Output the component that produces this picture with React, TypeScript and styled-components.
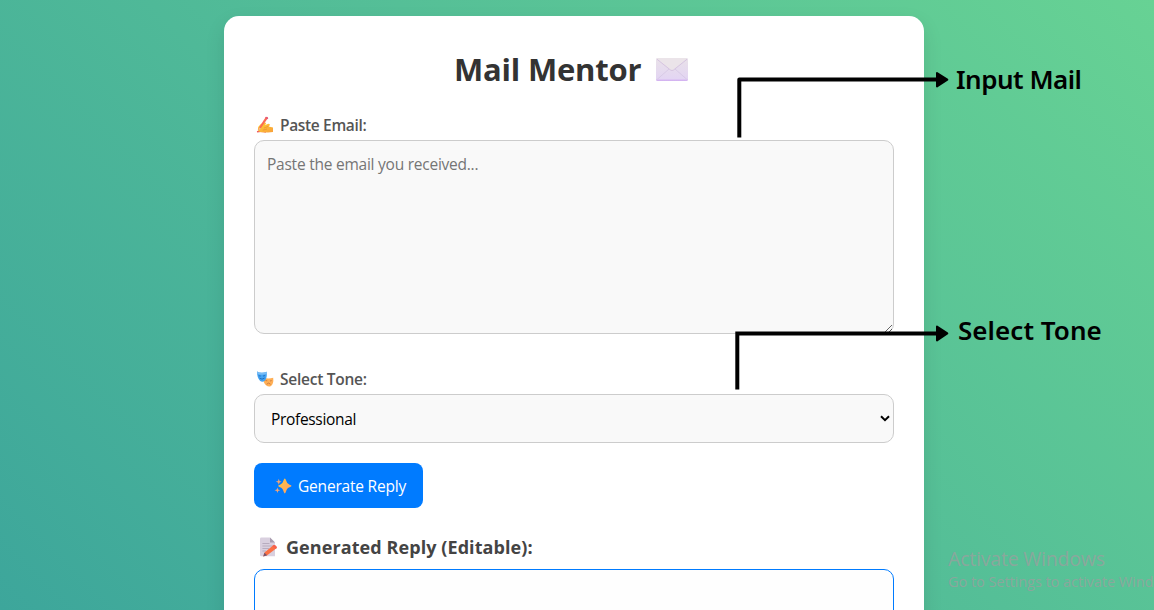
import React from "react";
import styled, { createGlobalStyle } from "styled-components";

const GlobalStyle = createGlobalStyle`
  * { box-sizing: border-box; }
  html, body { margin: 0; height: 610px; overflow: hidden; }
  body { font-family: "Open Sans", "Noto Sans", sans-serif; }
`;

const Page = styled.div`
  position: relative;
  height: 610px;
  overflow: hidden;
  padding-top: 16px;
  padding-left: 224px;
  background: linear-gradient(45deg, #3da69b 0%, #67d294 100%);
`;

const Card = styled.main`
  width: 700px;
  height: 900px;
  padding: 30px;
  display: flex;
  flex-direction: column;
  align-items: flex-start;
  background: #fff;
  border-radius: 15px;
  box-shadow: 0 8px 20px rgba(0, 0, 0, 0.1);
`;

const Label = styled.span<{ $size: number; $weight?: number; $color: string; $spacing?: number }>`
  font-size: ${(p) => p.$size}px;
  font-weight: ${(p) => p.$weight ?? 400};
  color: ${(p) => p.$color};
  letter-spacing: ${(p) => p.$spacing ?? 0}px;
  white-space: pre;
`;

const Title = styled.h1`
  margin: 0;
  width: 100%;
  height: 48px;
  padding: 0 206px 2px 200px;
  display: flex;
  align-items: center;
  justify-content: space-between;
`;

const FieldLabel = styled.label<{ $top: number }>`
  height: 22px;
  margin-top: ${(p) => p.$top}px;
  margin-bottom: 4px;
  padding-left: 2px;
  display: flex;
  align-items: center;
  gap: 6px;
`;

const MailInput = styled.textarea`
  display: block;
  width: 640px;
  height: 194px;
  padding: 11px 12px;
  border: 1px solid #ccc;
  border-radius: 10px;
  background: #f9f9f9;
  font: 400 15.5px/24px "Open Sans", "Noto Sans", sans-serif;
  letter-spacing: -0.24px;
  resize: vertical;
  outline: none;
  &::placeholder { color: #757575; }
`;

const ToneSelect = styled.div`
  width: 640px;
  height: 49px;
  padding: 0 3px 0 16px;
  display: flex;
  align-items: center;
  justify-content: space-between;
  border: 1px solid #ccc;
  border-radius: 10px;
  background: #f9f9f9;
`;

const GenerateButton = styled.button`
  width: 169px;
  height: 45px;
  margin-top: 20px;
  padding: 0 0 0 20px;
  display: flex;
  align-items: center;
  gap: 6px;
  border: 0;
  border-radius: 8px;
  background: #007bff;
  font-family: inherit;
`;

const SectionTitle = styled.h3`
  height: 26px;
  margin: 26px 0 9px;
  padding-left: 5px;
  display: flex;
  align-items: center;
  gap: 8px;
`;

const ReplyBox = styled.div`
  width: 640px;
  height: 200px;
  border: 1px solid #007bff;
  border-radius: 10px;
  background: #fefefe;
`;

const Callouts = styled.svg`
  position: absolute;
  left: 0;
  top: 0;
`;

const CalloutText = styled.div<{ $x: number; $y: number; $spacing: number }>`
  position: absolute;
  left: ${(p) => p.$x}px;
  top: ${(p) => p.$y}px;
  font: 600 26px/36px "Noto Sans", "Open Sans", sans-serif;
  letter-spacing: ${(p) => p.$spacing}px;
  color: #000;
  white-space: nowrap;
`;

const Watermark = styled.div`
  position: absolute;
  left: 948px;
  top: 547px;
  display: flex;
  flex-direction: column;
  line-height: 23px;
`;

const EnvelopeIcon = () => (
  <svg width="32" height="24" viewBox="0 0 32 24">
    <defs>
      <linearGradient id="env" x1="0" y1="0" x2="0" y2="1">
        <stop offset="0" stopColor="#e9e2e8" />
        <stop offset="0.9" stopColor="#e3d5f3" />
        <stop offset="1" stopColor="#cfaaf0" />
      </linearGradient>
    </defs>
    <rect width="32" height="23" y="1" rx="1.6" fill="url(#env)" />
    <path d="M1 22.5 L13 12 M31 22.5 L19 12" stroke="#d6c8e4" strokeWidth=".9" />
    <path d="M.8 2 L14.5 12.9 Q16 13.9 17.5 12.9 L31.2 2 Q31 1 30 1 H2 Q1 1 .8 2Z" fill="#ebe4e9" />
    <path d="M.8 2.1 L14.5 13 Q16 14 17.5 13 L31.2 2.1" fill="none" stroke="#d2c0df" strokeWidth=".9" />
  </svg>
);

const WritingHandIcon = () => (
  <svg width="18" height="18" viewBox="0 0 18 18">
    <defs>
      <linearGradient id="hand" x1="0" y1="0" x2="1" y2="1">
        <stop offset="0" stopColor="#ffd02f" />
        <stop offset="1" stopColor="#f9a03c" />
      </linearGradient>
    </defs>
    <path d="M1 15.8 Q6 14.6 10 16.2" stroke="#ef5b62" strokeWidth="1.4" fill="none" />
    <path d="M2.2 11 Q4.2 7.6 7.6 6.8 Q9.8 5.9 10 7.4 L9 9.2 Q12.4 6.8 13.8 8.2 Q14.3 9.3 12.6 10.4 L17 11.4 V16 L12 16.4 L5 16.2 Q1.7 15.7 1.9 13.8Z" fill="url(#hand)" />
    <path d="M8 12 L12.3 10.3 M6.8 14.2 L11 13" stroke="#ea8b35" strokeWidth=".7" />
    <path d="M2.2 14.4 L3.5 10.8 L9.6 1.2 Q11.2 .1 12.1 1.7 L5.2 11.8Z" fill="#fb6b52" />
    <path d="M9.5 1.3 L12 2.8" stroke="#dc5488" strokeWidth="1.3" />
    <path d="M2 15 L3.4 11.4 L5 12.4Z" fill="#f6bd8b" />
  </svg>
);

const MasksIcon = () => (
  <svg width="18" height="18" viewBox="0 0 18 18">
    <path d="M7 7.5 Q12 9.5 17.2 7.8 Q18 14.2 14.6 16.3 Q12.4 17.2 10 15.2 Q7 12.5 7 7.5Z" fill="#ffaf55" />
    <path d="M9.5 10.5 L11.3 10.8 M14 11 L15.7 10.6 M10.6 14.3 Q12.7 11.8 14.6 14.3" fill="none" stroke="#c9793f" strokeWidth=".9" />
    <path d="M1 1.6 Q5.6 4 10.6 1.7 Q11.4 8 8.8 10.8 Q6.4 12.5 4.2 11 Q.9 8 1 1.6Z" fill="#43a3f3" />
    <path d="M1 1.6 Q5.6 4 10.6 1.7 L10.7 4 Q5 5.5 1.1 3.8Z" fill="#78bcf5" />
    <path d="M2.6 5.8 L4.7 6 M7.1 6 L9.1 5.6 M3.6 8.2 Q6 10.2 8.6 8" fill="none" stroke="#2470bd" strokeWidth="1" />
  </svg>
);

const SparklesIcon = () => (
  <svg width="18" height="18" viewBox="0 0 18 18">
    <defs>
      <linearGradient id="spark" x1="0" y1="0" x2="1" y2="1">
        <stop offset="0" stopColor="#ffc83e" />
        <stop offset="1" stopColor="#ff9d66" />
      </linearGradient>
    </defs>
    <path d="M10.8 1.4 Q11.5 1.4 12 3.2 Q12.8 6.8 15.6 7.7 Q17.5 8.3 17.5 9 Q17.5 9.6 15.6 10.2 Q12.8 11 12 14.6 Q11.5 16.4 10.8 16.4 Q10.1 16.4 9.6 14.6 Q8.8 11 6 10.2 Q4.2 9.6 4.2 9 Q4.2 8.3 6 7.7 Q8.8 6.8 9.6 3.2 Q10.1 1.4 10.8 1.4Z" fill="url(#spark)" />
    <path d="M4.8 1.8 L5.5 4 L7.7 4.8 L5.5 5.6 L4.8 7.8 L4 5.6 L1.8 4.8 L4 4Z M3.4 10.4 L4.1 12.5 L6.2 13.2 L4.1 14 L3.4 16 L2.7 14 L.6 13.2 L2.7 12.5Z" fill="#f5a574" />
  </svg>
);

const MemoIcon = () => (
  <svg width="19" height="20" viewBox="0 0 19 20">
    <path d="M2.2 .5 H11 L16 5.5 V19.2 H2.2 Q1 19.2 1 18 V1.8 Q1 .5 2.2 .5Z" fill="#d9d0df" />
    <path d="M11 .5 V5.5 H16Z" fill="#a99caf" />
    <path d="M3.4 6.5 H10.5 M3.4 9 H13 M3.4 11.5 H10 M3.4 14 H7" stroke="#b3a8bb" strokeWidth=".9" />
    <path d="M14 8.6 Q15.3 7.3 16.7 8.7 L17.4 9.5 Q18.2 10.7 17.1 11.6 L8.2 18.3 L4.3 19.4 L5.5 15.6Z" fill="#fb7044" />
    <path d="M13.2 9.1 L16.7 12 L17.6 11.2 Q18.2 10.3 17.2 9.2 L16 8.2 Q15 7.6 14.2 8.3Z" fill="#f4604f" />
    <path d="M4.2 19.6 L5.4 15.8 L8.2 18.2Z" fill="#79546c" />
  </svg>
);

const ChevronIcon = () => (
  <svg width="10" height="8" viewBox="0 0 10 8">
    <path d="M1 1.2 L5 5.1 L9 1.2" fill="none" stroke="#000" strokeWidth="2" />
  </svg>
);

export default function App() {
  return (
    <>
      <GlobalStyle />
      <Page>
        <Card>
          <Title>
            <Label $size={31} $weight={700} $color="#333" $spacing={-0.2}>Mail Mentor</Label>
            <EnvelopeIcon />
          </Title>
          <FieldLabel $top={20}>
            <WritingHandIcon />
            <Label $size={15.5} $weight={600} $color="#555" $spacing={-0.34}>Paste Email:</Label>
          </FieldLabel>
          <MailInput placeholder="Paste the email you received..." />
          <FieldLabel $top={34}>
            <MasksIcon />
            <Label $size={15.5} $weight={600} $color="#555" $spacing={-0.25}>Select Tone:</Label>
          </FieldLabel>
          <ToneSelect>
            <Label $size={15.5} $color="#000" $spacing={-0.32}>Professional</Label>
            <ChevronIcon />
          </ToneSelect>
          <GenerateButton>
            <SparklesIcon />
            <Label $size={15.5} $color="#fff" $spacing={-0.2}>Generate Reply</Label>
          </GenerateButton>
          <SectionTitle>
            <MemoIcon />
            <Label $size={18} $weight={700} $color="#444" $spacing={0.08}>Generated Reply (Editable):</Label>
          </SectionTitle>
          <ReplyBox />
        </Card>
        <Callouts width="1154" height="610">
          <g fill="none" stroke="#000" strokeWidth="4">
            <path d="M739.3 137.5 V79.6 H938" strokeLinejoin="round" />
            <path d="M737.3 389.5 V333.4 H938" />
          </g>
          <g stroke="#000" strokeWidth="2" strokeLinejoin="round">
            <path d="M937 73 L947.3 79.6 L937 86.5Z" />
            <path d="M937 326.5 L947.3 333.4 L937 340.5Z" />
          </g>
        </Callouts>
        <CalloutText $x={956} $y={61} $spacing={-0.5}>Input Mail</CalloutText>
        <CalloutText $x={958} $y={312} $spacing={0.05}>Select Tone</CalloutText>
        <Watermark>
          <Label $size={19.5} $color="rgba(152,160,158,.8)" $spacing={-0.2}>Activate Windows</Label>
          <Label $size={14.5} $color="rgba(152,160,158,.8)" $spacing={-0.05}>Go to Settings to activate Wind</Label>
        </Watermark>
      </Page>
    </>
  );
}
